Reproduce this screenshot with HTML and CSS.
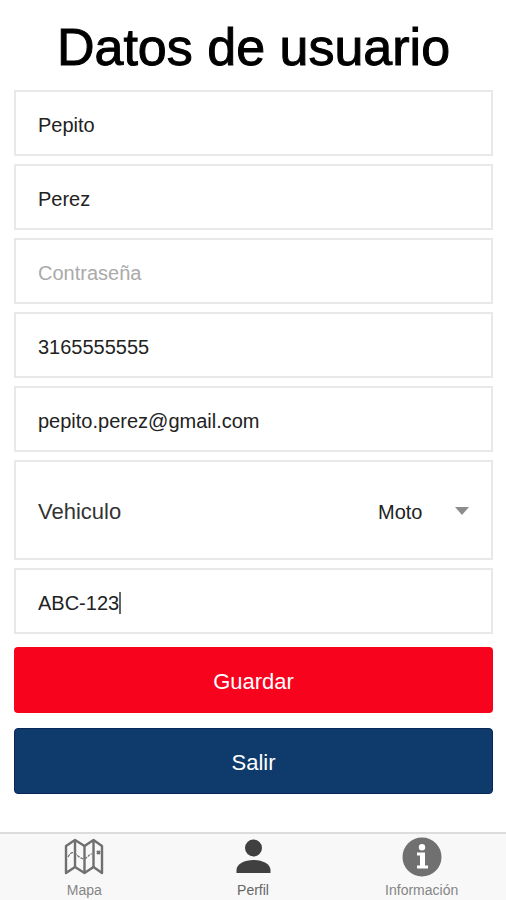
FILE: index.html
```html
<!DOCTYPE html>
<html lang="es">
<head>
    <meta charset="UTF-8">
    <meta name="viewport" content="width=device-width, initial-scale=1.0">
    <title>Datos de usuario</title>
    <link rel="stylesheet" href="styles.css">
</head>
<body>
    <main class="content">
        <h1 class="title">Datos de usuario</h1>

        <form class="form">
            <div class="field">
                <input class="input" type="text" aria-label="Nombre" value="Pepito">
            </div>
            <div class="field">
                <input class="input" type="text" aria-label="Apellido" value="Perez">
            </div>
            <div class="field">
                <input class="input" type="password" aria-label="Contraseña" placeholder="Contraseña">
            </div>
            <div class="field">
                <input class="input" type="tel" aria-label="Celular" value="3165555555">
            </div>
            <div class="field">
                <input class="input" type="email" aria-label="Correo" value="pepito.perez@gmail.com">
            </div>

            <div class="field field-select">
                <label class="field-label" for="vehiculo">Vehiculo</label>
                <div class="select-wrap">
                    <select class="select" id="vehiculo">
                        <option>Moto</option>
                        <option>Carro</option>
                    </select>
                    <svg class="select-arrow" viewBox="0 0 14 8" aria-hidden="true">
                        <path d="M0 0h14L7 8z"/>
                    </svg>
                </div>
            </div>

            <div class="field">
                <input class="input input-fit" type="text" aria-label="Placa" value="ABC-123">
                <span class="caret"></span>
            </div>

            <div class="actions">
                <button class="btn btn-save" type="submit">Guardar</button>
                <button class="btn btn-exit" type="button">Salir</button>
            </div>
        </form>
    </main>

    <nav class="tabs">
        <a class="tab" href="#mapa">
            <svg class="tab-icon" viewBox="0 0 40 40" fill="none" stroke="currentColor" aria-hidden="true">
                <path stroke-width="2.4" stroke-linejoin="round" d="M2 9l9-6 9.500 6 9-6 8.500 6v27l-8.500-6-9 6-9.500-6-9 6z"/>
                <path stroke-width="2.4" d="M11 3v27M20.500 9v27M29.500 3v27"/>
                <path stroke-width="1.2" stroke-dasharray="3 1" d="M4 20c3-6 6-5 9-2s6 5 9 3 3-4 6-4"/>
                <path stroke-width="2" d="M33 14l3 3M36 14l-3 3"/>
            </svg>
            <span>Mapa</span>
        </a>
        <a class="tab active" href="#perfil">
            <svg class="tab-icon" viewBox="0 0 40 40" fill="currentColor" aria-hidden="true">
                <circle cx="20.500" cy="11" r="8.500"/>
                <path d="M3.500 36v-3c0-6 8-10 17-10s17 4 17 10v3z"/>
            </svg>
            <span>Perfil</span>
        </a>
        <a class="tab" href="#informacion">
            <svg class="tab-icon" viewBox="0 0 40 40" aria-hidden="true">
                <circle cx="20" cy="20" r="19.500" fill="currentColor"/>
                <circle cx="20" cy="10.300" r="3.200" fill="#fff"/>
                <path fill="#fff" d="M15 15.500h8v13h3V31.500H15v-3h3v-10h-3z"/>
            </svg>
            <span>Información</span>
        </a>
    </nav>
</body>
</html>
```
FILE: styles.css
```css
* {
    margin: 0;
    padding: 0;
    box-sizing: border-box;
}

body {
    display: flex;
    flex-direction: column;
    min-height: 100vh;
    font-family: "Liberation Sans", Arial, sans-serif;
    font-size: 20px;
    color: #222;
    background: #fff;
}

.content {
    padding: 16px 13px 16px 14px;
}

.title {
    margin-bottom: 12px;
    font-size: 52px;
    line-height: 62px;
    font-weight: 400;
    text-align: center;
    color: #000;
    -webkit-text-stroke: 1px #000;
}

.form {
    display: flex;
    flex-direction: column;
    gap: 8px;
}

.field {
    display: flex;
    align-items: center;
    height: 66px;
    padding: 4px 22px 0;
    border: 2px solid #e8e8e8;
}

.input {
    flex: 1;
    min-width: 0;
    height: 100%;
    border: none;
    outline: none;
    background: none;
    font: inherit;
    color: inherit;
}

.input::placeholder {
    color: #aaa;
}

.input-fit {
    flex: none;
    field-sizing: content;
}

.caret {
    width: 2px;
    height: 22px;
    background: #666;
}

.field-select {
    justify-content: space-between;
    height: 100px;
}

.field-label {
    font-size: 22px;
    color: #333;
}

.select-wrap {
    position: relative;
}

.select {
    appearance: none;
    padding-right: 40px;
    border: none;
    background: none;
    font: inherit;
    color: inherit;
}

.select-arrow {
    position: absolute;
    top: 6px;
    right: 0;
    width: 14px;
    height: 8px;
    fill: #8c8c8c;
    pointer-events: none;
}

.actions {
    display: flex;
    flex-direction: column;
    gap: 15px;
    margin-top: 5px;
}

.btn {
    height: 66px;
    padding-top: 4px;
    border: none;
    border-radius: 4px;
    font: inherit;
    font-size: 22px;
    color: #fff;
    cursor: pointer;
}

.btn-save {
    background: #f7031e;
}

.btn-exit {
    background: #0e3b6c;
    border: 1px solid #082658;
}

.tabs {
    display: flex;
    margin-top: auto;
    padding: 3px 0 2px;
    border-top: 2px solid #dcdcdc;
    background: #f8f8f8;
}

.tab {
    flex: 1;
    display: flex;
    flex-direction: column;
    align-items: center;
    gap: 5px;
    font-size: 14px;
    line-height: 16px;
    color: #858585;
    text-decoration: none;
}

.tab-icon {
    width: 40px;
    height: 40px;
    color: #707070;
}

.tab.active {
    color: #666;
}

.tab.active .tab-icon {
    color: #404040;
}
```
